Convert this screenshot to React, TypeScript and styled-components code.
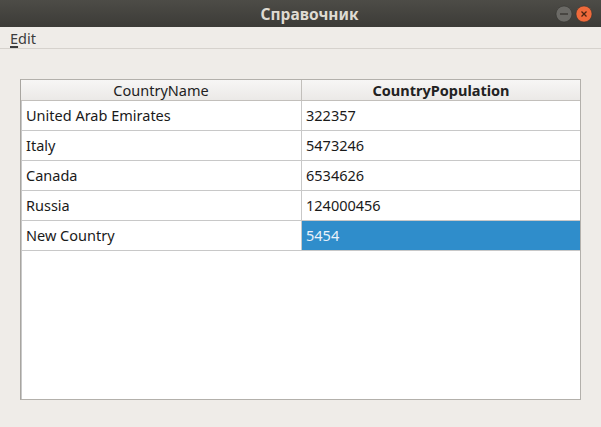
import React from "react";
import styled, { createGlobalStyle } from "styled-components";

const GlobalStyle = createGlobalStyle`
  html, body {
    margin: 0;
    padding: 0;
    background: #efece8;
    font-family: "Noto Sans", "DejaVu Sans", sans-serif;
  }
`;

type Row = { name: string; population: string; selected?: boolean };

const rows: Row[] = [
  { name: "United Arab Emirates", population: "322357" },
  { name: "Italy", population: "5473246" },
  { name: "Canada", population: "6534626" },
  { name: "Russia", population: "124000456" },
  { name: "New Country", population: "5454", selected: true },
];

const Window = styled.div`
  width: 601px;
  height: 427px;
  display: flex;
  flex-direction: column;
  background: #efece8;
  overflow: hidden;
`;

const TitleBar = styled.div`
  height: 27px;
  flex: none;
  display: flex;
  align-items: center;
  justify-content: center;
  position: relative;
  background: linear-gradient(#4d4c47, #3c3b37);
`;

const TitleText = styled.span`
  color: #dfdbd2;
  font-weight: bold;
  font-size: 15.5px;
  margin-left: 18px;
`;

const WindowButtons = styled.div`
  position: absolute;
  right: 8px;
  top: 5px;
  display: flex;
  gap: 2px;
`;

const MenuBar = styled.div`
  height: 21px;
  flex: none;
  display: flex;
  align-items: center;
  padding-left: 10px;
  border-bottom: 1px solid #d6d2cd;
  font-size: 14.5px;
  color: #3c3c3c;
`;

const MenuItem = styled.span`
  u {
    text-decoration-thickness: 2px;
    text-underline-offset: 2px;
  }
`;

const Content = styled.div`
  flex: 1;
  padding: 30px 20px 27px 20px;
  display: flex;
`;

const Table = styled.div`
  flex: 1;
  background: #fff;
  border: 1px solid #b3b0ab;
  border-left-color: #a8a5a0;
  display: flex;
  flex-direction: column;
  width: 559px;
`;

const Header = styled.div`
  display: grid;
  grid-template-columns: 280px 1fr;
  height: 20px;
  background: linear-gradient(#f7f6f5, #ebe9e7);
  border-bottom: 1px solid #c2bfbb;
`;

const HeaderCell = styled.div<{ $bold?: boolean }>`
  display: flex;
  align-items: center;
  justify-content: center;
  font-size: 14.5px;
  color: #222;
  font-weight: ${({ $bold }) => ($bold ? "bold" : "normal")};
  & + & {
    border-left: 1px solid #c2bfbb;
  }
`;

const Body = styled.div`
  border-left: 1px solid #c8c8c8;
  flex: 1;
`;

const DataRow = styled.div`
  display: grid;
  grid-template-columns: 279px 1fr;
  height: 29px;
  border-bottom: 1px solid #c8c8c8;
`;

const Cell = styled.div<{ $selected?: boolean }>`
  display: flex;
  align-items: center;
  padding: 0 0 2px 4px;
  font-size: 14.5px;
  color: ${({ $selected }) => ($selected ? "#eaf2fa" : "#1a1a1a")};
  background: ${({ $selected }) => ($selected ? "#2f8dcb" : "transparent")};
  & + & {
    border-left: 1px solid #c8c8c8;
  }
`;

const Circle = ({ fill, children }: { fill: string; children: React.ReactNode }) => (
  <svg width="18" height="18" viewBox="0 0 18 18">
    <circle cx="9" cy="9" r="8" fill={fill} stroke="#2f2e2a" strokeWidth="0.5" />
    {children}
  </svg>
);

export default function App() {
  return (
    <>
      <GlobalStyle />
      <Window>
        <TitleBar>
          <TitleText>Справочник</TitleText>
          <WindowButtons>
            <Circle fill="#6b6a66">
              <line x1="5" y1="9" x2="13" y2="9" stroke="#3c3b37" strokeWidth="1.5" />
            </Circle>
            <Circle fill="#ef6a3b">
              <path d="M6.5 6.5 L11.5 11.5 M11.5 6.5 L6.5 11.5" stroke="#4a2512" strokeWidth="1.3" />
            </Circle>
          </WindowButtons>
        </TitleBar>
        <MenuBar>
          <MenuItem>
            <u>E</u>dit
          </MenuItem>
        </MenuBar>
        <Content>
          <Table>
            <Header>
              <HeaderCell>CountryName</HeaderCell>
              <HeaderCell $bold>CountryPopulation</HeaderCell>
            </Header>
            <Body>
              {rows.map((r) => (
                <DataRow key={r.name}>
                  <Cell>{r.name}</Cell>
                  <Cell $selected={r.selected}>{r.population}</Cell>
                </DataRow>
              ))}
            </Body>
          </Table>
        </Content>
      </Window>
    </>
  );
}
